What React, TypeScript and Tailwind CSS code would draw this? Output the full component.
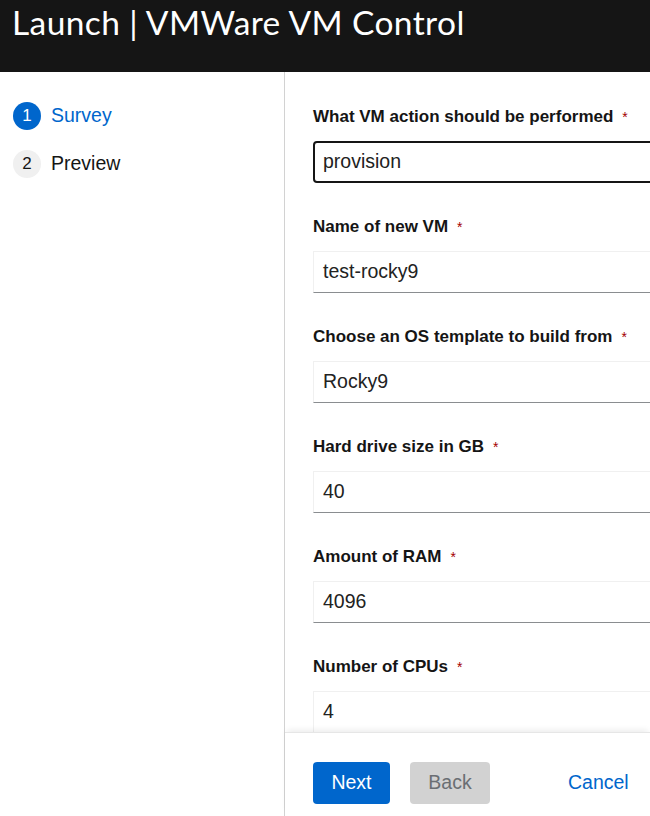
import type { ReactNode } from 'react'

const fields = [
  { label: 'What VM action should be performed', value: 'provision', select: true },
  { label: 'Name of new VM', value: 'test-rocky9' },
  { label: 'Choose an OS template to build from', value: 'Rocky9' },
  { label: 'Hard drive size in GB', value: '40' },
  { label: 'Amount of RAM', value: '4096' },
  { label: 'Number of CPUs', value: '4' },
]

function Step({ n, children, current = false }: { n: number; children: ReactNode; current?: boolean }) {
  return (
    <li className="flex h-[28px] items-center gap-[10px]">
      <span
        className={
          current
            ? 'flex h-[28px] w-[28px] items-center justify-center rounded-full bg-[#0066cc] text-[17px] text-white'
            : 'flex h-[28px] w-[28px] items-center justify-center rounded-full bg-[#f0f0f0] text-[17px] text-[#151515]'
        }
      >
        {n}
      </span>
      <span className={current ? 'text-[19.5px] text-[#0066cc]' : 'text-[19.5px] text-[#151515]'}>{children}</span>
    </li>
  )
}

function Field({ label, value, select = false }: { label: string; value: string; select?: boolean }) {
  return (
    <div className="mb-[31px]">
      <label className="flex h-[26px] items-center text-[17px] font-bold text-[#151515]">
        {label}
        <span className="ml-[9px] text-[14px] font-normal text-[#a30000]">*</span>
      </label>
      <div
        className={
          select
            ? 'mt-[11px] flex h-[42px] w-[400px] items-center rounded-[4px] border-2 border-[#151515] pl-[8px] text-[19.5px] text-[#222]'
            : 'mt-[11px] flex h-[42px] w-[400px] items-center border border-[#f0f0f0] border-b-[#8a8d90] pl-[9px] text-[19.5px] text-[#222]'
        }
      >
        {value}
      </div>
    </div>
  )
}

export default function App() {
  return (
    <div className="flex h-[816px] w-[650px] flex-col overflow-hidden bg-white font-['Liberation_Sans',Arial,sans-serif]">
      <header className="h-[72px] shrink-0 bg-[#151515] pl-[12px]">
        <h1 className="pt-[2px] font-['Lato',sans-serif] text-[33.5px] leading-[40px] tracking-[0.4px] text-white">
          Launch | VMWare VM Control
        </h1>
      </header>

      <div className="flex min-h-0 flex-1">
        <nav className="w-[285px] shrink-0 border-r border-[#d2d2d2] pl-[13px] pt-[30px]">
          <ol className="flex flex-col gap-[20px]">
            <Step n={1} current>
              Survey
            </Step>
            <Step n={2}>Preview</Step>
          </ol>
        </nav>

        <main className="flex min-w-0 flex-1 flex-col">
          <div className="min-h-0 flex-1 overflow-hidden pl-[28px] pt-[32px]">
            {fields.map((f) => (
              <Field key={f.label} {...f} />
            ))}
          </div>
          <footer className="flex h-[84px] shrink-0 items-start border-t border-[#e6e6e6] pl-[28px] pt-[29px] shadow-[0_-4px_6px_-2px_rgba(0,0,0,0.08)]">
            <button
              type="button"
              className="h-[42px] w-[77px] rounded-[4px] bg-[#0066cc] text-[19.5px] text-white"
            >
              Next
            </button>
            <button
              type="button"
              disabled
              className="ml-[20px] h-[42px] w-[80px] rounded-[4px] bg-[#d2d2d2] text-[19.5px] text-[#6a6e73]"
            >
              Back
            </button>
            <button type="button" className="ml-[58px] h-[42px] px-[20px] text-[19.5px] text-[#0066cc]">
              Cancel
            </button>
          </footer>
        </main>
      </div>
    </div>
  )
}
